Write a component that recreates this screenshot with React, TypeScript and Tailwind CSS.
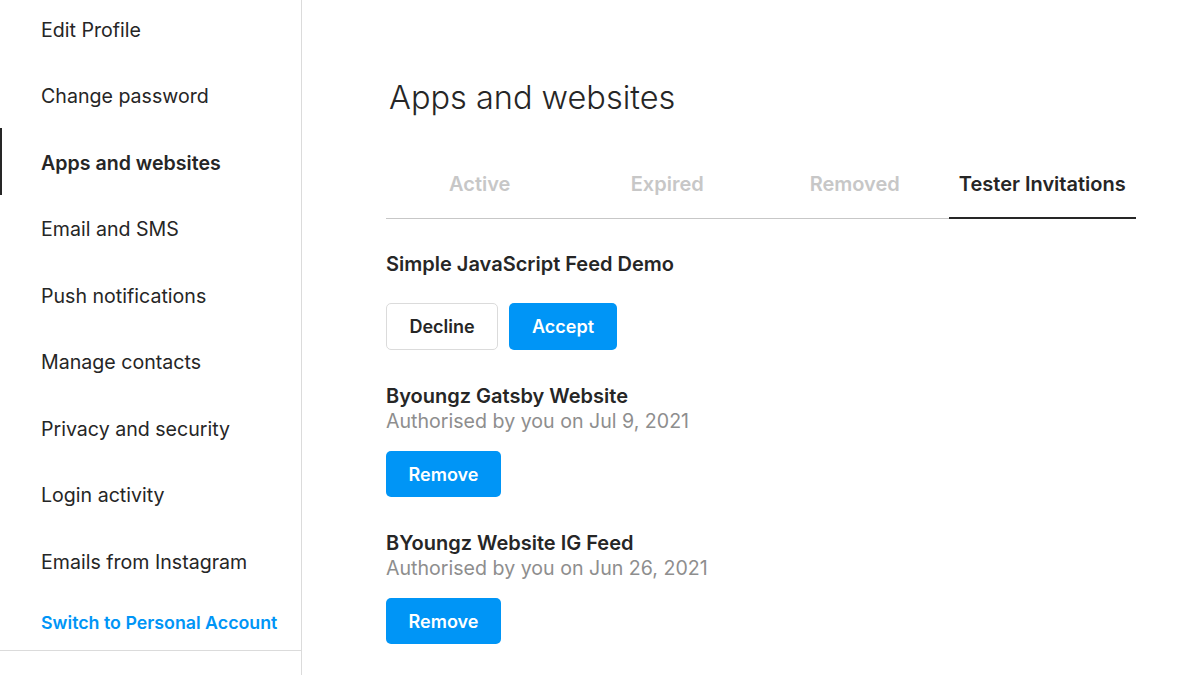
import React from "react";

const items = [
  "Edit Profile",
  "Change password",
  "Apps and websites",
  "Email and SMS",
  "Push notifications",
  "Manage contacts",
  "Privacy and security",
  "Login activity",
  "Emails from Instagram",
];

function Sidebar() {
  return (
    <div className="w-[302px] shrink-0 border-r border-[#dbdbdb] h-full">
      <div className="-mt-[5px]">
        {items.map((t, i) => {
          const active = i === 2;
          return (
            <div
              key={t}
              className={
                "h-[66.5px] flex items-center pt-[3px] text-[19.6px] leading-6 text-[#262626] " +
                (active ? "border-l-2 border-[#262626] pl-[39px] font-semibold" : "pl-[41px]")
              }
            >
              {t}
            </div>
          );
        })}
        <div className="h-[57px] flex items-center pt-[3px] pl-[41px] border-b border-[#dbdbdb] text-[17.8px] font-semibold text-[#0095f6]">
          Switch to Personal Account
        </div>
      </div>
    </div>
  );
}

function BlueBtn({ label, w }: { label: string; w: string }) {
  return (
    <button className={"h-[46px] rounded-[5px] bg-[#0095f6] text-white text-[18px] font-semibold " + w}>
      {label}
    </button>
  );
}

export default function App() {
  const tabs = ["Active", "Expired", "Removed", "Tester Invitations"];
  return (
    <div
      className="w-[1200px] h-[675px] bg-white flex overflow-hidden"
      style={{ fontFamily: "Inter, 'Noto Sans', sans-serif" }}
    >
      <Sidebar />
      <div className="flex-1 pl-[84px] pt-[77px]">
        <div className="w-[750px]">
          <h1 className="text-[32.5px] leading-[42px] font-light text-[#262626] pl-[3px] mb-[53px]">
            Apps and websites
          </h1>
          <div className="flex border-b border-[#c7c7c7]">
            {tabs.map((t, i) => {
              const active = i === 3;
              return (
                <div
                  key={t}
                  className={
                    "flex-1 text-center text-[20px] leading-6 font-semibold pb-[21px] " +
                    (active ? "text-[#262626] border-b-2 border-[#262626] -mb-px" : "text-[#c7c7c7]")
                  }
                >
                  {t}
                </div>
              );
            })}
          </div>
          <div className="mt-[33px] text-[20px] leading-6 font-semibold text-[#262626]">
            Simple JavaScript Feed Demo
          </div>
          <div className="mt-[27px] flex gap-[11px]">
            <button className="h-[47px] w-[112px] rounded-[5px] border border-[#dbdbdb] bg-white text-[#262626] text-[18px] font-semibold">
              Decline
            </button>
            <button className="h-[47px] w-[108px] rounded-[5px] bg-[#0095f6] text-white text-[18px] font-semibold">
              Accept
            </button>
          </div>

          <div className="mt-[34px] text-[20px] leading-6 font-semibold text-[#262626]">
            Byoungz Gatsby Website
          </div>
          <div className="text-[19.6px] leading-[26px] text-[#8e8e8e]">Authorised by you on Jul 9, 2021</div>
          <div className="mt-[17px]">
            <BlueBtn label="Remove" w="w-[115px]" />
          </div>

          <div className="mt-[34px] text-[20px] leading-6 font-semibold text-[#262626]">
            BYoungz Website IG Feed
          </div>
          <div className="text-[19.6px] leading-[26px] text-[#8e8e8e]">Authorised by you on Jun 26, 2021</div>
          <div className="mt-[17px]">
            <BlueBtn label="Remove" w="w-[115px]" />
          </div>
        </div>
      </div>
    </div>
  );
}
